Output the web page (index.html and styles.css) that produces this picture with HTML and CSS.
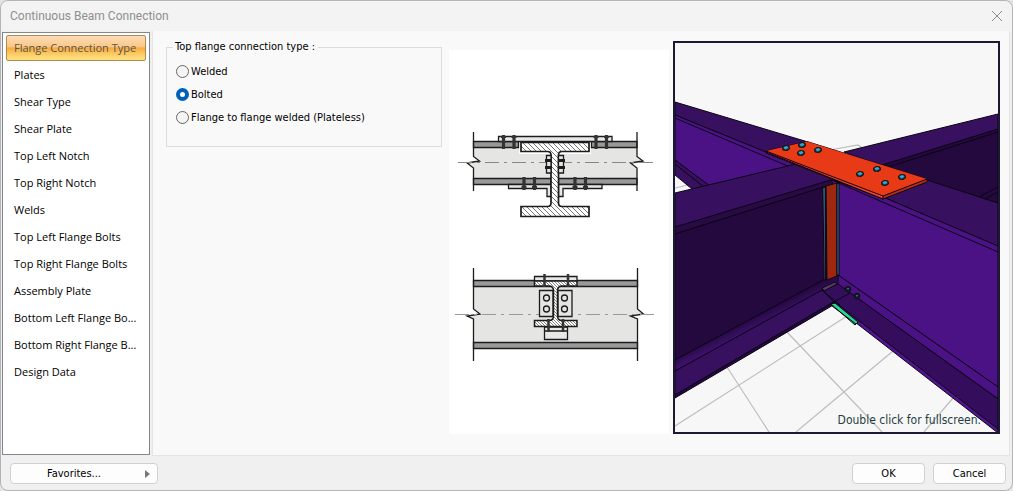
FILE: index.html
```html
<!DOCTYPE html>
<html lang="en">
<head>
<meta charset="utf-8">
<title>Continuous Beam Connection</title>
<link rel="stylesheet" href="styles.css">
</head>
<body>
<div class="dialog">
  <header class="titlebar">
    <h1 class="title">Continuous Beam Connection</h1>
    <button class="close" type="button" aria-label="Close">
      <svg width="12" height="12" viewBox="0 0 12 12"><path d="M1 1L11 11M11 1L1 11" stroke="#8c8c8c" fill="none"/></svg>
    </button>
  </header>
  <main class="body">
    <nav class="sidebar">
      <a class="item selected" href="#flange">Flange Connection Type</a>
      <a class="item" href="#plates">Plates</a>
      <a class="item" href="#shear-type">Shear Type</a>
      <a class="item" href="#shear-plate">Shear Plate</a>
      <a class="item" href="#tl-notch">Top Left Notch</a>
      <a class="item" href="#tr-notch">Top Right Notch</a>
      <a class="item" href="#welds">Welds</a>
      <a class="item" href="#tl-bolts">Top Left Flange Bolts</a>
      <a class="item" href="#tr-bolts">Top Right Flange Bolts</a>
      <a class="item" href="#assembly">Assembly Plate</a>
      <a class="item" href="#bl-bolts">Bottom Left Flange Bo...</a>
      <a class="item" href="#br-bolts">Bottom Right Flange B...</a>
      <a class="item" href="#design">Design Data</a>
    </nav>
    <section class="panel">
      <fieldset class="group">
        <legend>Top flange connection type :</legend>
        <label class="option"><input type="radio" name="type">Welded</label>
        <label class="option"><input type="radio" name="type" checked>Bolted</label>
        <label class="option"><input type="radio" name="type">Flange to flange welded (Plateless)</label>
      </fieldset>
      <svg class="diagram" viewBox="449 50 220 384" role="img" aria-label="Beam section diagrams">
        <defs>
          <pattern id="hatch" width="5" height="5" patternUnits="userSpaceOnUse"><rect width="5" height="5" fill="#fff"/><path d="M-1 -1L6 6M-1 4L1 6M4 -1L6 1" stroke="#555" stroke-width=".8"/></pattern>
          <pattern id="hatch2" width="3" height="3" patternUnits="userSpaceOnUse"><rect width="3" height="3" fill="#fff"/><path d="M-1 -1L4 4" stroke="#555" stroke-width=".7"/></pattern>
        </defs>
        <g stroke="#1c1c1c" stroke-width="1.3" fill="none">
          <path d="M473.500 147H519V154H591V147H637V156.500L643 161L630.500 163L637 168V178H473.500V168L467 163L479.500 161L473.500 156.500Z" fill="#e5e5e3" stroke="none"/>
          <path d="M473.500 141.500H518.500V147.500H473.500ZM591.500 141.500H637V147.500H591.500ZM473.500 178.500H551V184.500H473.500ZM558.500 178.500H637V184.500H558.500Z" fill="#999"/>
          <path d="M498.500 136.500H612V141.500H498.500ZM508.500 184.500H551V196.500H547V188.500H508.500ZM558.500 184.500H602V188.500H563V196.500H558.500Z" fill="#e8e8e6"/>
          <path d="M473.500 132V156.500L479.500 161L467 163L473.500 168V191M637 132V156.500L643 161L630.500 163L637 168V191"/>
          <path d="M458 162.500H551M558 162.500H654" stroke="#888" stroke-width="1" stroke-dasharray="14 5 3 5"/>
          <path d="M521 142.500H589V151.500H562Q558.500 151.500 558.500 155V203Q558.500 206.500 562 206.500H589V216.500H521V206.500H547.500Q551 206.500 551 203V155Q551 151.500 547.500 151.500H521Z" fill="url(#hatch)" stroke-width="1.7"/>
          <path d="M546.500 155.500H551V173H546.500ZM558.500 155.500H563.500V173H558.500Z" fill="#e5e5e3"/>
          <path d="M545 160.500H551M545 167.500H551M558.500 160.500H565M558.500 167.500H565" stroke-width="3"/>
          <path d="M503.500 135V149M514 135V149M596 135V149M606.500 135V149M524 177V190M534.500 177V190M575 177V190M585.500 177V190" stroke="#333" stroke-width="3.200"/>
          <path d="M501 137H506M511.500 137H516.500M593.500 137H598.500M604 137H609M521.500 187H526.500M532 187H537M572.500 187H577.500M583 187H588" stroke="#333" stroke-width="2"/>
          <path d="M473.500 286.500H637.500V309L643.500 314L630.500 316L637.500 319V342.500H473.500V319L467 316L480 314L473.500 309Z" fill="#e5e5e3" stroke="none"/>
          <path d="M473.500 280.500H637.500V286.500H473.500ZM473.500 342.500H637.500V348.500H473.500Z" fill="#999"/>
          <path d="M473.500 268V309L480 314L467 316L473.500 319V361M637.500 268V309L643.500 314L630.500 316L637.500 319V361"/>
          <path d="M455 314.500H552M559 314.500H655" stroke="#999" stroke-width="1" stroke-dasharray="14 5 3 5"/>
          <path d="M534.500 276.500H577V281H534.500ZM544.500 327H567.500V339.500H544.500ZM544.500 331H567.500" fill="#e8e8e6"/>
          <path d="M539.500 290.500H553V316.500H539.500ZM558 290.500H572V316.500H558Z" fill="#e5e5e3"/>
          <path d="M534.500 281H577V286H562Q557.500 286 557.500 291V316Q557.500 320.500 562 320.500H577V326.500H534.500V320.500H549Q553.500 320.500 553.500 316V291Q553.500 286 549 286H534.500Z" fill="url(#hatch2)" stroke-width="1.500"/>
          <circle cx="546.500" cy="298" r="3"/><circle cx="546.500" cy="309" r="3"/><circle cx="564.500" cy="298" r="3"/><circle cx="564.500" cy="309" r="3"/>
          <path d="M544.500 274V287M568 274V287M548.500 319V332M563 319V332" stroke="#333" stroke-width="2.500"/>
        </g>
      </svg>
      <div class="preview">
        <svg class="scene" viewBox="675 43 323 389" role="img" aria-label="3D view of the connection">
          <defs>
            <linearGradient id="g1" gradientUnits="userSpaceOnUse" x1="747" y1="320" x2="752" y2="330"><stop stop-color="#24093f"/><stop offset="1" stop-color="#3d116b"/></linearGradient>
            <linearGradient id="g2" gradientUnits="userSpaceOnUse" x1="922" y1="334" x2="915" y2="344"><stop stop-color="#4a1284"/><stop offset=".6" stop-color="#4a1284"/><stop offset="1" stop-color="#350d5d"/></linearGradient>
            <g id="bolt"><path d="M-3.500 -1L-1 -2.500L3 -2L3.500 1L1 2.500L-3 2Z" fill="#153746" stroke="#111"/><path d="M-2.500 -1L1 -2L2.500 0L-1 1.500Z" fill="#35a7ce"/></g>
            <g id="dark-bolt"><circle r="2.800" fill="#0d1e28" stroke="#111"/><path d="M-1 -1L1 -1L0 1Z" fill="#2a87a8"/></g>
          </defs>
          <rect x="675" y="43" width="323" height="389" fill="#f7f7f7"/>
          <g stroke="#bdbdbd" stroke-width="1.200" fill="none">
            <path d="M675 426L858 309M727 367L769 432M787 332L882 432M796 432L893 351M924 432L953 398M675 188L692 184M830 150L858 145L864 149"/>
          </g>
          <g stroke="#0c0414" stroke-width="1" stroke-linejoin="round">
            <path d="M675 102L808 142L840 170L795 166L675 115Z" fill="#37105f"/>
            <path d="M675 115L798 165L780 170L708 186L675 160Z" fill="#4a1284"/>
            <path d="M675 118L790 167" fill="none"/>
            <path d="M675 160L710 186L692 189L675 175Z" fill="#37105f"/>
            <path d="M675 164L704 187" fill="none"/>
            <path d="M844 152L998 114V204L927 184Z" fill="#37105f"/>
            <path d="M882 165L998 129V203L925 180Z" fill="#24093f"/>
            <path d="M888 167L998 132M979 197L998 187M985 199L998 192" fill="none"/>
            <path d="M883 197L927 180L998 203V247Z" fill="#37105f"/>
            <path d="M675 193L796 164L838 181L834 185L675 234Z" fill="#37105f"/>
            <path d="M675 227L834 179L833 185L675 234Z" fill="#280a45"/>
            <path d="M675 234L833 184V277L675 360Z" fill="#24093f"/>
            <path d="M675 360L825 279L838 275L845 287L675 371Z" fill="url(#g1)"/>
            <path d="M675 371L822 290L842 282L850 294L675 395Z" fill="#37105f"/>
            <path d="M675 395L835 301V304L675 398Z" fill="#24093f"/>
            <path d="M832 180L883 197L998 246V387L838 275Z" fill="#4a1284"/>
            <path d="M834 181L998 252" fill="none"/>
            <path d="M838 275L998 387V399L838 285Z" fill="url(#g2)"/>
            <path d="M838 284L998 399V430L835 303L822 290Z" fill="#350d5d"/>
            <path d="M835 302L998 429V433L833 305Z" fill="#521491"/>
            <path d="M822 290L840 305M832 303L850 293" fill="none"/>
            <path d="M822 288L835 282L837 284L824 291Z" fill="#54405f"/>
            <path d="M823 188L825 187V280L824 280Z" fill="#42b1b5"/>
            <path d="M826 186L837 183V276L827 280Z" fill="#9e280f"/>
            <path d="M837 183L839 184V275L837 275Z" fill="#298591"/>
            <path d="M831 304L835 303L858 322L855 325Z" fill="#27da8c"/>
            <path d="M832 306L856 324" fill="none"/>
            <path d="M766 151L807 141.500L927 179V182L883 199L766 153Z" fill="#b72c12"/>
            <path d="M766 151L807 141.500L927 179L883 196Z" fill="#e83a17" stroke="none"/>
            <path d="M766 151L883 196V199L766 152Z" fill="#f04320"/>
            <path d="M883 196L927 179" fill="none"/>
          </g>
          <use href="#bolt" x="786" y="148"/><use href="#bolt" x="802" y="145"/><use href="#bolt" x="801" y="153"/><use href="#bolt" x="818" y="150"/>
          <use href="#bolt" x="860" y="174"/><use href="#bolt" x="877" y="169"/><use href="#bolt" x="885" y="183"/><use href="#bolt" x="902" y="177"/>
          <use href="#dark-bolt" x="848" y="289"/><use href="#dark-bolt" x="857" y="296"/>
        </svg>
        <span class="hint">Double click for fullscreen.</span>
      </div>
    </section>
  </main>
  <footer class="footer">
    <button class="btn favorites" type="button"><span class="label">Favorites...</span><svg width="5" height="8" viewBox="0 0 5 8"><path d="M0 0L5 4L0 8Z" fill="#777"/></svg></button>
    <button class="btn" type="button">OK</button>
    <button class="btn" type="button">Cancel</button>
  </footer>
</div>
</body>
</html>
```
FILE: styles.css
```css
* { box-sizing: border-box; }
body {
  margin: 0;
  background: #e4e4e4;
  font: 11px/16px "DejaVu Sans Condensed", "DejaVu Sans", sans-serif;
  color: #000;
}
.dialog {
  display: flex;
  flex-direction: column;
  min-height: 100vh;
  background: #f0f0f0;
  border: 1px solid #b4b4b4;
  border-radius: 8px;
}
.titlebar {
  display: flex;
  align-items: center;
  justify-content: space-between;
  height: 30px;
  padding: 0 9px;
  background: #f3f3f3;
  border-radius: 8px 8px 0 0;
}
.title {
  margin: 0;
  font: 12px/16px Roboto, sans-serif;
  color: #8f8f8f;
}
.close {
  display: flex;
  padding: 0;
  border: 0;
  background: none;
}
.body {
  display: flex;
  flex: 1;
  gap: 2px;
  padding: 0 2px 0 1px;
}
.sidebar {
  display: flex;
  flex-direction: column;
  gap: 1px;
  width: 148px;
  margin: 1px 0;
  padding: 2px 3px;
  background: #fff;
  border: 1px solid #82878f;
  font-family: "Open Sans", sans-serif;
  font-weight: 500;
}
.item {
  height: 26px;
  padding: 0 7px;
  border: 1px solid transparent;
  border-radius: 2px;
  line-height: 24px;
  color: #000;
  text-decoration: none;
  white-space: nowrap;
}
.selected {
  border-color: #b08b4f;
  background: linear-gradient(#fbdcb9 0, #fbc785 45%, #f9ab3b 50%, #fdd774 85%, #fee07f 100%);
  color: #555;
}
.panel {
  display: flex;
  flex: 1;
  align-items: flex-start;
  padding: 8px 9px 20px 13px;
  background: #f9f9f9;
  border: 1px solid #e5e5e5;
  border-top: 0;
}
.group {
  flex: 1;
  min-width: 0;
  height: 108px;
  margin: 0 7px 0 0;
  padding: 5px 9px;
  border: 1px solid #dcdcdc;
}
.group legend {
  padding: 0 3px 0 2px;
  margin-left: -3px;
}
.option {
  display: flex;
  align-items: center;
  gap: 2px;
  height: 23px;
}
.option input {
  appearance: none;
  width: 13px;
  height: 13px;
  margin: 0;
  border: 1px solid #666;
  border-radius: 50%;
  background: #f4f4f4;
}
.option input:checked {
  border: 4px solid #005fb8;
  background: #fff;
}
.diagram {
  width: 220px;
  height: 384px;
  margin: 11px 4px 0 0;
  background: #fff;
}
.preview {
  position: relative;
  margin-top: 2px;
  border: 2px solid #1a1a32;
}
.scene {
  display: block;
  width: 323px;
  height: 389px;
}
.hint {
  position: absolute;
  right: 17px;
  bottom: 4px;
  font-size: 12px;
  color: #263e43;
}
.footer {
  display: flex;
  gap: 8px;
  padding: 7px 6px 6px 9px;
}
.btn {
  display: flex;
  align-items: center;
  justify-content: center;
  width: 73px;
  height: 21px;
  padding: 0;
  border: 1px solid #d0d0d0;
  border-radius: 4px;
  background: #fdfdfd;
  font: inherit;
  color: #000;
}
.favorites {
  width: 148px;
  margin-right: auto;
  padding: 0 7px 0 0;
}
.label { flex: 1; padding-right: 8px; }
```
